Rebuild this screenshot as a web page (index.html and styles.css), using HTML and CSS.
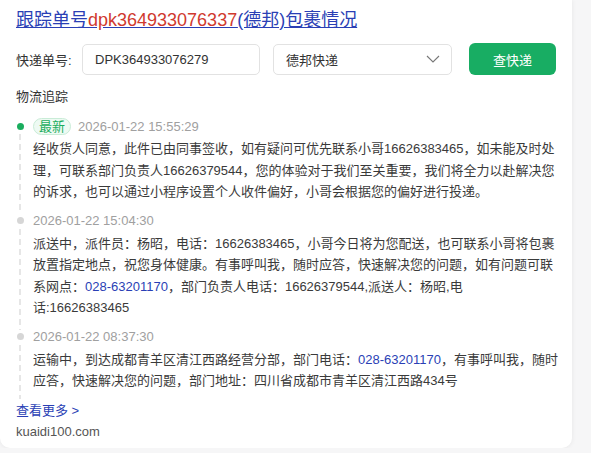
FILE: index.html
```html
<!DOCTYPE html>
<html lang="zh-CN">
<head>
<meta charset="utf-8">
<title>跟踪单号包裹情况</title>
<link rel="stylesheet" href="styles.css">
</head>
<body>
<div class="card">
  <h1 class="title"><a href="#">跟踪单号<span class="num">dpk364933076337</span>(德邦)包裹情况</a></h1>
  <div class="search">
    <span class="label">快递单号:</span>
    <div class="input">DPK364933076279</div>
    <div class="select">
      <span>德邦快递</span>
      <svg class="chev" width="14" height="8" viewBox="0 0 14 8"><path d="M1 1 L7 7 L13 1" fill="none" stroke="#777" stroke-width="1.1"/></svg>
    </div>
    <button class="btn">查快递</button>
  </div>
  <div class="section">物流追踪</div>
  <ul class="timeline">
    <li class="item latest">
      <div class="head"><span class="badge">最新</span><span class="time">2026-01-22 15:55:29</span></div>
      <p class="desc">经收货人同意，此件已由同事签收，如有疑问可优先联系小哥16626383465，如未能及时处理，可联系部门负责人16626379544，您的体验对于我们至关重要，我们将全力以赴解决您的诉求，也可以通过小程序设置个人收件偏好，小哥会根据您的偏好进行投递。</p>
    </li>
    <li class="item">
      <div class="head"><span class="time">2026-01-22 15:04:30</span></div>
      <p class="desc">派送中，派件员：杨昭，电话：16626383465，小哥今日将为您配送，也可联系小哥将包裹放置指定地点，祝您身体健康。有事呼叫我，随时应答，快速解决您的问题，如有问题可联系网点：<a href="#" class="tel">028-63201170</a>，部门负责人电话：16626379544,派送人：杨昭,电<br>话:16626383465</p>
    </li>
    <li class="item">
      <div class="head"><span class="time">2026-01-22 08:37:30</span></div>
      <p class="desc">运输中，到达成都青羊区清江西路经营分部，部门电话：<a href="#" class="tel">028-63201170</a>，有事呼叫我，随时应答，快速解决您的问题，部门地址：四川省成都市青羊区清江西路434号</p>
    </li>
  </ul>
  <a href="#" class="more">查看更多 &gt;</a>
  <div class="site">kuaidi100.com</div>
</div>
</body>
</html>
```
FILE: styles.css
```css
html, body {
  margin: 0;
  padding: 0;
}
body {
  background: #f6f6f7;
  font-family: "Liberation Sans", "Noto Sans CJK SC", sans-serif;
  color: #333;
  font-size: 13px;
}
.card {
  box-sizing: border-box;
  width: 572px;
  height: 448px;
  background: #fff;
  border-radius: 0 0 10px 10px;
  box-shadow: 0 0 5px rgba(0, 0, 0, 0.07);
  padding: 8px 12px 0 16px;
}
.title {
  margin: 0;
  font-size: 18px;
  font-weight: normal;
  line-height: 24px;
}
.title a {
  color: #2a3fb5;
  text-decoration: underline;
}
.title .num {
  color: #d0392e;
}
.search {
  display: flex;
  align-items: center;
  height: 32px;
  margin-top: 11px;
}
.label {
  width: 66px;
  font-size: 13px;
  color: #333;
}
.input, .select {
  box-sizing: border-box;
  height: 31px;
  border: 1px solid #e2e2e2;
  border-radius: 5px;
  padding: 0 12px;
  display: flex;
  align-items: center;
  font-size: 13px;
  color: #333;
}
.input {
  width: 178px;
}
.select {
  width: 179px;
  margin-left: 13px;
  justify-content: space-between;
  padding-right: 11px;
}
.chev {
  display: block;
}
.btn {
  margin-left: 17px;
  width: 87px;
  height: 32px;
  border: none;
  border-radius: 6px;
  background: #18ad63;
  color: #fff;
  font-family: inherit;
  font-size: 13px;
  padding: 0;
}
.section {
  margin-top: 12px;
  line-height: 20px;
  font-size: 13px;
  color: #333;
}
.timeline {
  list-style: none;
  margin: 8px 0 0;
  padding: 0;
}
.item {
  position: relative;
  padding: 0 0 7px 17px;
}
.item::before {
  content: "";
  position: absolute;
  left: 0.5px;
  top: 7.5px;
  width: 7px;
  height: 7px;
  border-radius: 50%;
  background: #d6d6d6;
}
.item::after {
  content: "";
  position: absolute;
  left: 3px;
  top: 19px;
  bottom: -4px;
  width: 2px;
  background: repeating-linear-gradient(#e6e6e6 0 6px, transparent 6px 10px);
}
.item:last-child::after {
  bottom: 0;
}
.item.latest::before {
  background: #1aad5e;
}
.head {
  display: flex;
  align-items: center;
  height: 22px;
}
.badge {
  box-sizing: border-box;
  height: 17px;
  line-height: 15px;
  padding: 0 5px;
  border: 1px solid #c9ecd7;
  background: #eefaf3;
  border-radius: 9px;
  color: #1aad5e;
  font-size: 13px;
  margin-right: 7px;
}
.time {
  color: #a0a0a0;
  font-size: 13px;
}
.desc {
  margin: 1px 0 0;
  line-height: 21.5px;
  font-size: 13px;
  color: #3a3a3a;
}
.tel {
  color: #2a3fb5;
  text-decoration: none;
}
.more {
  display: inline-block;
  margin-top: 2px;
  line-height: 20px;
  color: #2a3fb5;
  text-decoration: none;
  font-size: 13px;
}
.site {
  line-height: 20px;
  margin-top: 1px;
  color: #555;
  font-size: 13px;
}
```
